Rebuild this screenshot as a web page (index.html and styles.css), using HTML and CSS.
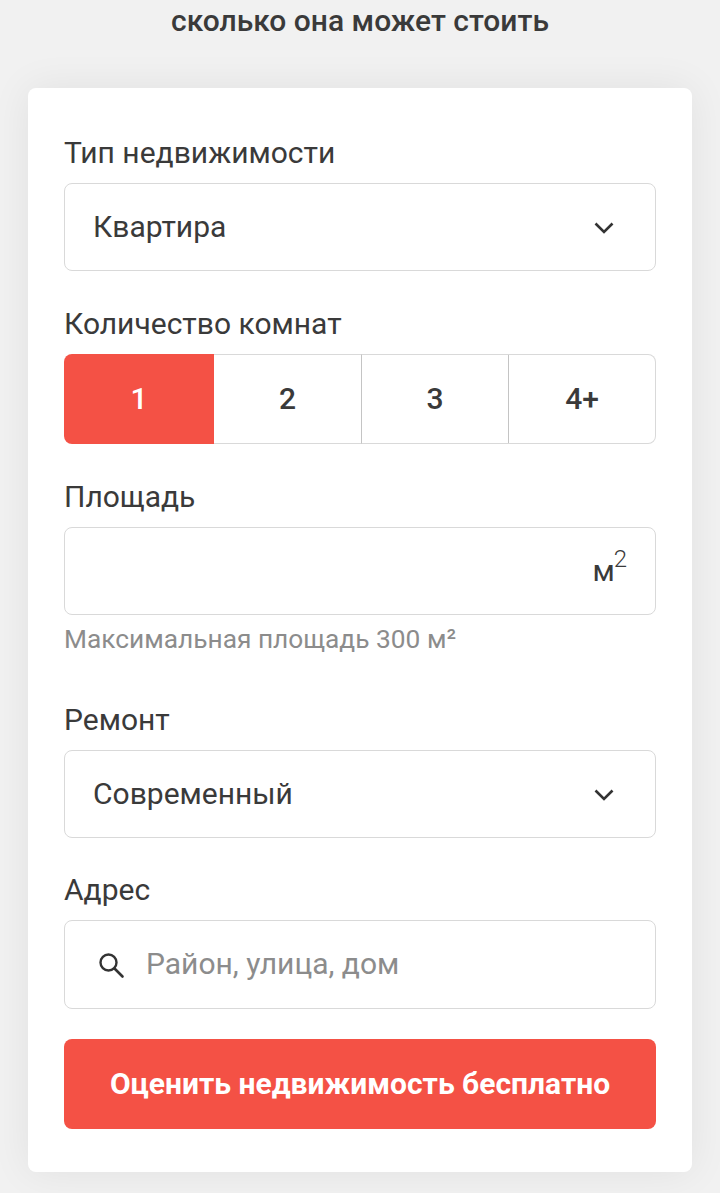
FILE: index.html
```html
<!DOCTYPE html>
<html lang="ru">
<head>
    <meta charset="UTF-8">
    <meta name="viewport" content="width=device-width, initial-scale=1.0">
    <title>Оценка недвижимости</title>
    <link rel="stylesheet" href="styles.css">
</head>
<body>
    <h1 class="title">сколько она может стоить</h1>

    <form class="card">
        <div class="field field-type">
            <div class="label">Тип недвижимости</div>
            <div class="control">
                <span class="value">Квартира</span>
                <svg class="chevron" viewBox="0 0 20 12" fill="none"><path d="M1.5 1.5l8.5 8.5 8.5-8.5" stroke="#333" stroke-width="2.6"/></svg>
            </div>
        </div>

        <div class="field field-rooms">
            <div class="label">Количество комнат</div>
            <div class="rooms">
                <div class="room active">1</div>
                <div class="room">2</div>
                <div class="room">3</div>
                <div class="room">4+</div>
            </div>
        </div>

        <div class="field field-area">
            <div class="label">Площадь</div>
            <div class="control control-end">
                <span class="value">м<sup class="unit-power">2</sup></span>
            </div>
            <div class="hint">Максимальная площадь 300 м²</div>
        </div>

        <div class="field field-repair">
            <div class="label">Ремонт</div>
            <div class="control">
                <span class="value">Современный</span>
                <svg class="chevron" viewBox="0 0 20 12" fill="none"><path d="M1.5 1.5l8.5 8.5 8.5-8.5" stroke="#333" stroke-width="2.6"/></svg>
            </div>
        </div>

        <div class="field field-address">
            <div class="label">Адрес</div>
            <div class="control control-search">
                <svg class="search" viewBox="0 0 28 28" fill="none"><circle cx="11.5" cy="11.5" r="8" stroke="#333" stroke-width="2.4"/><path d="M17.5 17.5l8 8" stroke="#333" stroke-width="2.6" stroke-linecap="round"/></svg>
                <span class="placeholder">Район, улица, дом</span>
            </div>
        </div>

        <button class="submit" type="button">Оценить недвижимость бесплатно</button>
    </form>
</body>
</html>
```

FILE: styles.css
```css
* {
    box-sizing: border-box;
}

html, body {
    height: 1193px;
    overflow: hidden;
}

body {
    margin: 0;
    padding: 0 28px;
    background: #f1f1f1;
    font-family: Roboto, 'Noto Sans', sans-serif;
    color: #3a3a3a;
}

.title {
    margin: 0;
    height: 88px;
    padding-top: 3px;
    text-align: center;
    font-size: 30px;
    line-height: 36px;
    font-weight: 500;
    color: #3a3a3a;
}

.card {
    height: 1084px;
    padding: 48px 36px 0;
    background: #fff;
    border-radius: 8px;
    box-shadow: 0 0 40px rgba(0, 0, 0, 0.07);
}

.label {
    height: 47px;
    font-size: 30px;
    line-height: 34px;
}

.field-rooms {
    margin-top: 36px;
}

.field-area {
    margin-top: 36px;
}

.field-repair {
    margin-top: 48px;
}

.field-address {
    margin-top: 35px;
}

.control {
    display: flex;
    align-items: center;
    justify-content: space-between;
    height: 88px;
    padding: 0 28px;
    border: 1px solid #d9d9d9;
    border-radius: 8px;
    background: #fff;
}

.control-end {
    justify-content: flex-end;
}

.control-search {
    justify-content: flex-start;
    height: 89px;
    padding-left: 32px;
}

.value {
    padding-bottom: 2px;
    font-size: 30px;
}

.unit-power {
    font-size: 24px;
    font-weight: 300;
    line-height: 0;
    margin-left: -1px;
    vertical-align: 14px;
}

.chevron {
    width: 20px;
    height: 12px;
    margin-top: 2px;
    margin-right: 13px;
}

.search {
    width: 28px;
    height: 28px;
    flex: none;
}

.placeholder {
    margin-left: 21px;
    padding-bottom: 2px;
    font-size: 30px;
    color: #8c8c8c;
}

.hint {
    margin-top: 8px;
    font-size: 26.3px;
    line-height: 32px;
    color: #8c8c8c;
}

.rooms {
    display: grid;
    grid-template-columns: 150px 147px 147px 1fr;
    height: 90px;
}

.room {
    display: flex;
    align-items: center;
    justify-content: center;
    padding-bottom: 2px;
    font-size: 30px;
    font-weight: 500;
    border: 1px solid #d9d9d9;
    border-left-color: #c4c4c4;
    border-right: 0;
}

.room:nth-child(2) {
    border-left: 0;
}

.room:last-child {
    border-right: 1px solid #d9d9d9;
    border-radius: 0 8px 8px 0;
}

.room.active {
    border: 0;
    border-radius: 8px 0 0 8px;
    background: #f45145;
    color: #fff;
}

.submit {
    display: block;
    width: 100%;
    height: 90px;
    margin-top: 30px;
    padding-bottom: 2px;
    border: 0;
    border-radius: 8px;
    background: #f45145;
    color: #fff;
    font-family: inherit;
    font-size: 30px;
    font-weight: 700;
}
```
